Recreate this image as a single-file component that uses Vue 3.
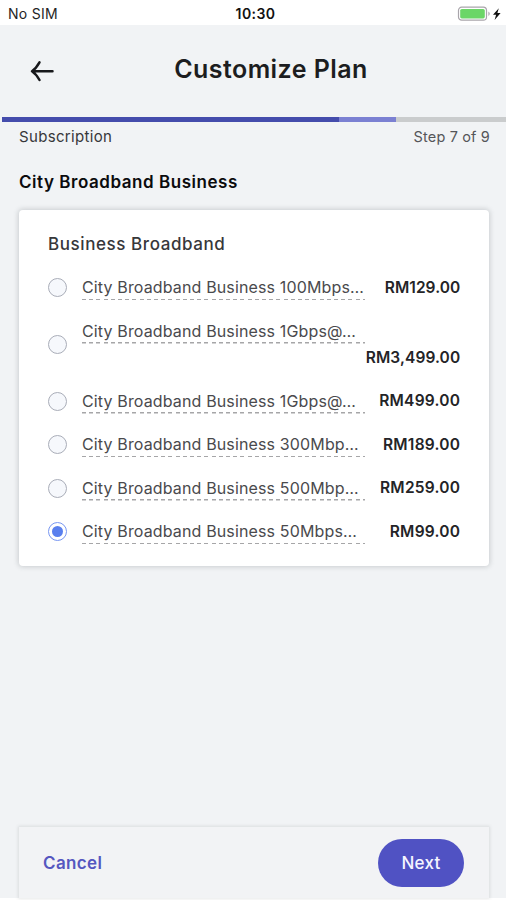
<script setup>
import { ref } from 'vue'

const plans = [
  { id: 'p100', name: 'City Broadband Business 100Mbps…', price: 'RM129.00', tight: true },
  { id: 'p1g', name: 'City Broadband Business 1Gbps@…', price: 'RM3,499.00', wrap: true },
  { id: 'p1gb', name: 'City Broadband Business 1Gbps@…', price: 'RM499.00' },
  { id: 'p300', name: 'City Broadband Business 300Mbp…', price: 'RM189.00' },
  { id: 'p500', name: 'City Broadband Business 500Mbp…', price: 'RM259.00' },
  { id: 'p50', name: 'City Broadband Business 50Mbps…', price: 'RM99.00' }
]
const selected = ref('p50')
</script>

<template>
  <div class="screen">
    <div class="status">
      <span class="carrier">No SIM</span>
      <span class="clock">10:30</span>
      <svg class="battery" width="46" height="18" viewBox="0 0 46 18">
        <rect x="1.5" y="2.2" width="28" height="13" rx="3.2" fill="#fff" stroke="#a9a5ab" stroke-width="1.2" />
        <rect x="3.2" y="4" width="24.6" height="9.4" rx="1.6" fill="#6bd667" />
        <path d="M31.4 6.5c1.8.8 1.8 3.6 0 4.4z" fill="#a9a5ab" />
        <path d="M41.8 3.2L36 9.8h3.1l-1.5 5.3 6-7.1h-3.2z" fill="#111" />
      </svg>
    </div>
    <div class="page">
      <header class="header">
        <svg class="back" width="26" height="22" viewBox="0 0 26 22" fill="none" stroke="#17181b" stroke-width="2.5" stroke-linecap="round" stroke-linejoin="round">
          <path d="M23.5 11.2H3.2M10.5 2.4Q7 8.6 3 11.2Q7 13.8 10.5 20" />
        </svg>
        <h1 class="title">Customize Plan</h1>
      </header>
      <div class="progress">
        <div class="done"></div>
        <div class="current"></div>
      </div>
      <main class="content">
        <div class="steps">
          <span class="step-name">Subscription</span>
          <span class="step-count">Step 7 of 9</span>
        </div>
        <h2 class="section">City Broadband Business</h2>
        <section class="card">
          <h3 class="group">Business Broadband</h3>
          <div v-for="p in plans" :key="p.id" class="plan" :class="{ tall: p.wrap, tight: p.tight }" @click="selected = p.id">
            <span class="radio" :class="{ on: selected === p.id }"></span>
            <div class="details">
              <span class="name">{{ p.name }}</span>
              <span class="price">{{ p.price }}</span>
            </div>
          </div>
        </section>
      </main>
      <footer class="actions">
        <button class="cancel">Cancel</button>
        <button class="next">Next</button>
      </footer>
    </div>
  </div>
</template>

<style>
body { background: #fff; overflow: hidden; }
</style>

<style scoped>
.screen {
  width: 507px;
  height: 900px;
  display: flex;
  flex-direction: column;
  overflow: hidden;
  background: #fff;
  font-family: Inter, "Liberation Sans", sans-serif;
  color: #37373a;
}
h1, h2, h3 { margin: 0; }
.status {
  height: 25px;
  flex: none;
  display: grid;
  grid-template-columns: 1fr auto 1fr;
  align-items: center;
  padding: 2px 4px 0 8px;
  box-sizing: border-box;
  color: #252525;
}
.carrier { font-size: 14px; letter-spacing: 0.3px; }
.clock { font-size: 14px; font-weight: 600; letter-spacing: 0.4px; color: #111; }
.battery { justify-self: end; }
.page {
  height: 873px;
  flex: none;
  display: flex;
  flex-direction: column;
  background: #f1f3f5;
  margin-right: 1px;
  box-sizing: border-box;
}
.header {
  height: 92px;
  flex: none;
  display: grid;
  grid-template-columns: 71px 400px;
  align-items: center;
}
.back { margin: 0 0 0 29px; }
.title {
  text-align: center;
  font-size: 25px;
  font-weight: 600;
  letter-spacing: 0.45px;
  color: #1c1d20;
  line-height: 30px;
  white-space: nowrap;
  padding-bottom: 4px;
}
.progress { height: 5px; flex: none; display: flex; background: #cacccd; margin-left: 2px; }
.done { width: 337px; background: #444cac; }
.current { width: 57px; background: #7b80d2; }
.content { flex: 1; padding: 5px 16px 0 19px; }
.steps { display: flex; justify-content: space-between; font-size: 14.5px; line-height: 20px; }
.step-name { font-size: 15px; letter-spacing: 0.33px; }
.step-count { color: #555659; letter-spacing: 0.15px; }
.section { font-size: 17px; line-height: 24px; font-weight: 600; letter-spacing: 0.54px; color: #0b0b0d; margin-top: 23px; white-space: nowrap; }
.card {
  width: 470px;
  height: 356px;
  margin-top: 16px;
  padding: 23px 29px 0 29px;
  box-sizing: border-box;
  background: #fff;
  border-radius: 4px;
  box-shadow: 0 0 5px 1px rgba(70, 74, 80, 0.22);
}
.group { font-size: 17px; line-height: 23px; font-weight: 450; letter-spacing: 0.58px; color: #37373a; margin-bottom: 9.5px; white-space: nowrap; }
.plan { height: 43.5px; display: flex; align-items: center; gap: 15px; }
.plan.tall { height: 70px; }
.radio {
  position: relative;
  top: 0.5px;
  width: 19px;
  height: 19px;
  flex: none;
  box-sizing: border-box;
  border: 1.5px solid #a9adb8;
  border-radius: 50%;
  background: #f6f8fc;
  display: flex;
  align-items: center;
  justify-content: center;
}
.radio.on { border-color: #7897f2; background: #fff; }
.radio.on::after { content: ""; width: 11px; height: 11px; border-radius: 50%; background: #597fee; }
.details { flex: 1; display: flex; flex-wrap: wrap; justify-content: space-between; align-items: center; }
.name {
  width: 283px;
  height: 26px;
  box-sizing: border-box;
  white-space: nowrap;
  font-size: 16px;
  line-height: 27px;
  letter-spacing: 0.14px;
  color: #4a4a4d;
  background: repeating-linear-gradient(90deg, #a6a6a8 0 4px, transparent 4px 7.2px) 0 100% / 100% 1.5px no-repeat;
}
.price { margin-left: auto; white-space: nowrap; font-size: 15.5px; line-height: 27px; font-weight: 600; letter-spacing: 0.25px; margin-right: -0.25px; color: #242427; }
.tight .price { letter-spacing: 0.05px; }
.tall .name { margin-right: 40px; }
.tall .price { letter-spacing: 0.1px; }
.actions {
  width: 470px;
  height: 71px;
  flex: none;
  margin-left: 19px;
  padding: 1px 25px 0 24px;
  box-sizing: border-box;
  display: flex;
  align-items: center;
  justify-content: space-between;
  background: #f2f3f5;
  box-shadow: 0 0 3px 1px rgba(70, 74, 80, 0.13);
}
button { border: 0; font: inherit; cursor: pointer; }
.cancel { padding: 0; background: none; color: #5557c0; font-size: 17px; font-weight: 600; letter-spacing: 0.35px; }
.next { width: 86px; height: 48px; padding: 0; border-radius: 24px; background: #5052c3; color: #f5f5ff; font-size: 17px; font-weight: 500; letter-spacing: 0.3px; }
</style>
